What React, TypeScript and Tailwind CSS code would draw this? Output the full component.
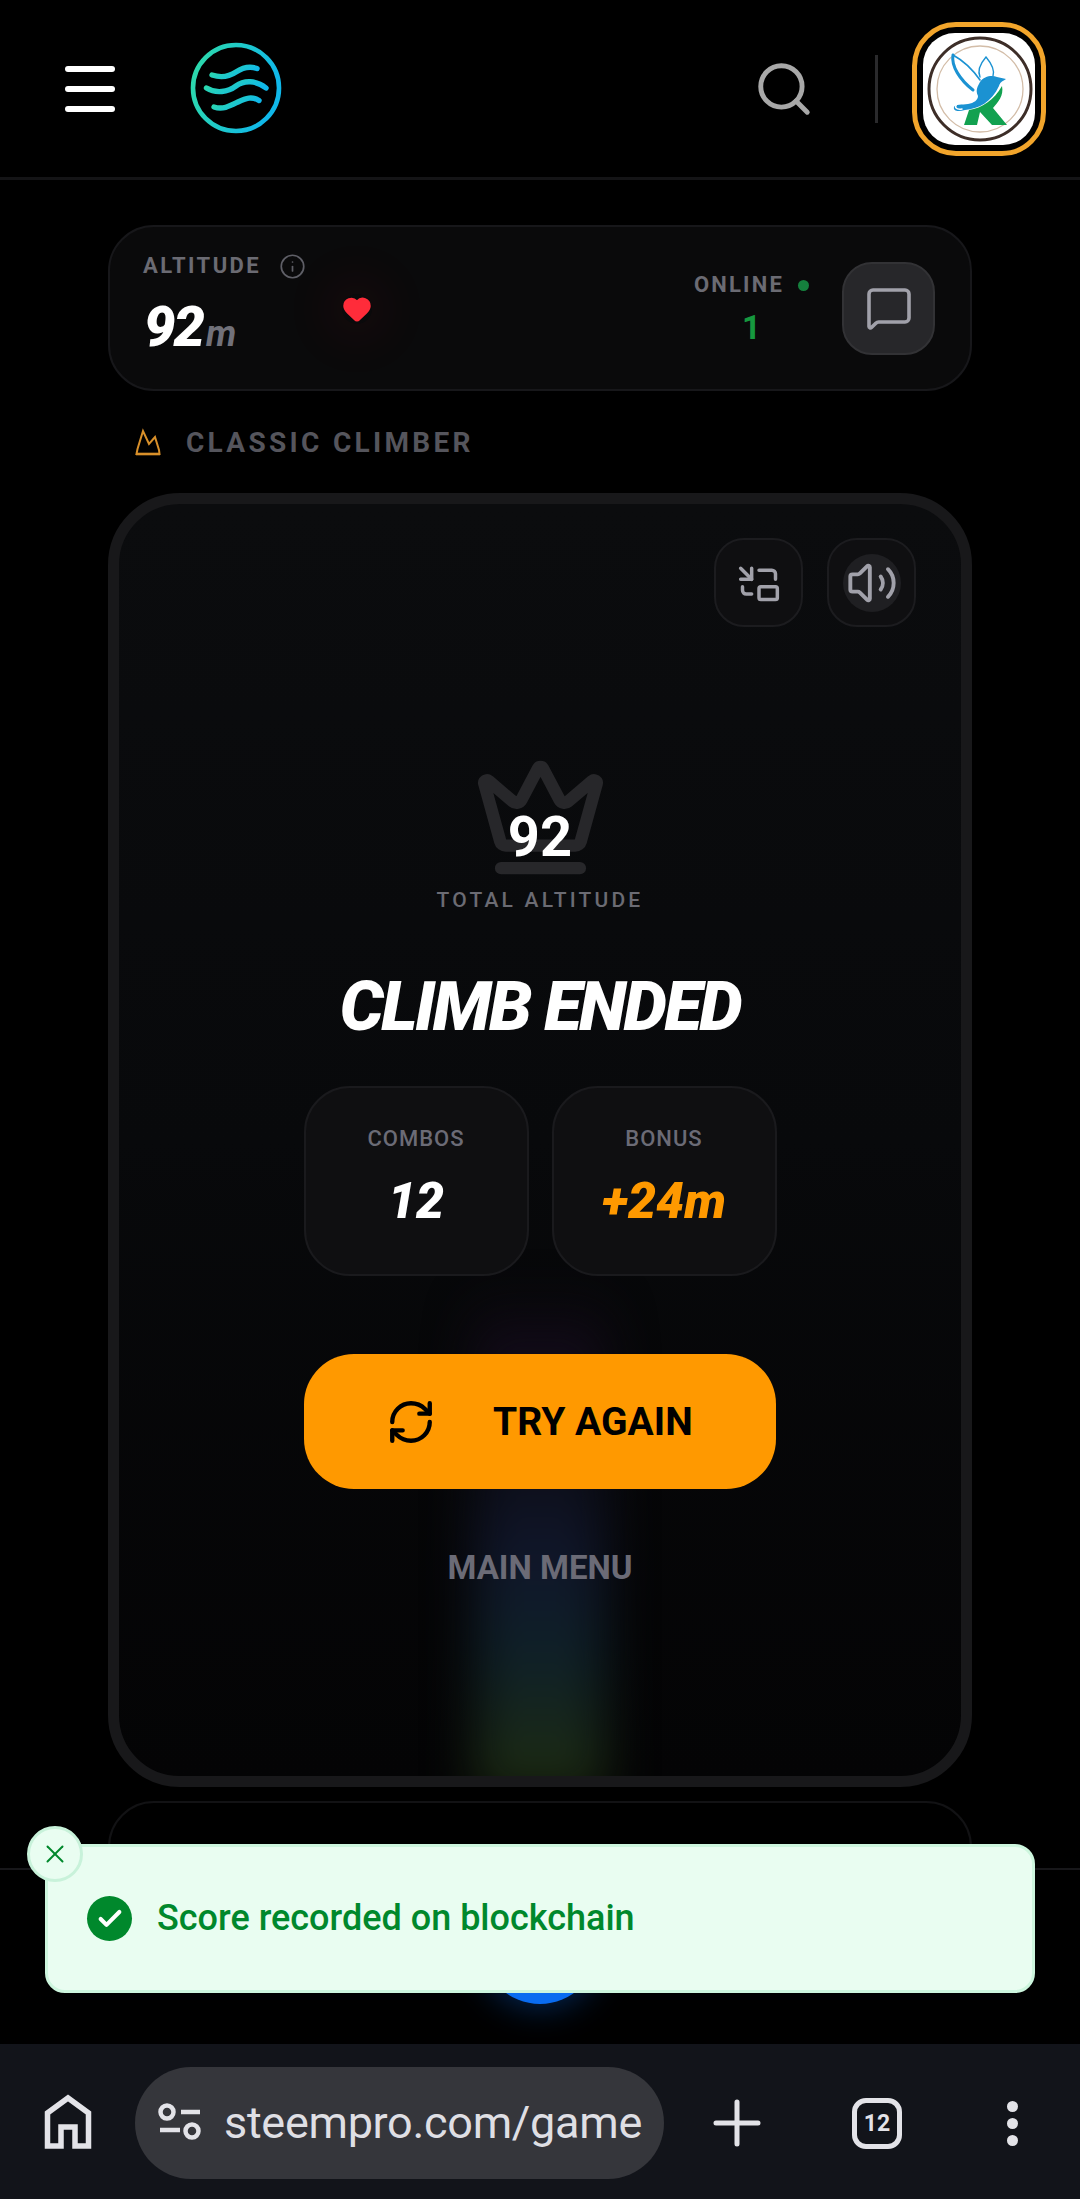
import React from "react";
import { Crown, Heart, Info, MessageSquare, PictureInPicture, RefreshCw, Search, Volume2, X, Check } from "lucide-react";

function WaveLogo() {
  return (
    <svg width="110" height="110" viewBox="0 0 110 110" fill="none" className="ml-[65px]">
      <defs>
        <linearGradient id="wl" x1="0" y1="0" x2="1" y2="0.3">
          <stop offset="0" stopColor="#2fdca6" />
          <stop offset="1" stopColor="#10b8ea" />
        </linearGradient>
      </defs>
      <g stroke="url(#wl)" strokeLinecap="round" strokeWidth="5.4">
        <circle cx="56" cy="54" r="43" strokeWidth="4.6" />
        <path d="M32 41C41 44 50 42 56 38S70 32 77 34.5" />
        <path d="M26.500 54C36 60 48 58 56 52S76 46 86 54" />
        <path d="M34 73C43 76 50 72 58 68S72 62 79 66.500" />
      </g>
    </svg>
  );
}

function Avatar() {
  return (
    <div className="w-[134px] h-[134px] rounded-[44px] border-[5px] border-[#f2a52b] bg-black flex items-center justify-center">
      <div className="w-[112px] h-[112px] rounded-[32px] bg-white overflow-hidden">
        <svg width="112" height="112" viewBox="3 3 112 112" fill="none">
          <circle cx="60" cy="59" r="51" stroke="#3d2e28" strokeWidth="3" />
          <circle cx="60" cy="59" r="43" stroke="#d3bda8" strokeWidth="1.300" />
          <path d="M82 56C84 66 78 72 73 78L87 95H72L60 82L57 95H44L49 80C62 78 74 70 82 56Z" fill="#12a150" />
          <path d="M86 49L77 47C72 45 64 46 60 52C58 56 55 60 58 66C58 70 54 73 48 74C42 75 35 74 34 77C33 81 38 82 45 80C58 79 72 72 79 56C80 52 83 51 86 49Z" fill="#1b92d2" />
          <path d="M33 25C31 36 40 50 53 60" stroke="#1b92d2" strokeWidth="3" strokeLinecap="round" />
          <path d="M33 25C44 31 53 40 60 50" stroke="#1b92d2" strokeWidth="1.600" strokeLinecap="round" />
          <path d="M66 27C60 34 57 40 60 47M66 27C71 33 75 40 73 46" stroke="#1b92d2" strokeWidth="1.400" strokeLinecap="round" />
          <path d="M37 74C34 77 36 80 42 79" stroke="#ffffff" strokeWidth="1.500" strokeLinecap="round" />
        </svg>
      </div>
    </div>
  );
}

function Header() {
  return (
    <header className="h-[180px] shrink-0 border-b-[3px] border-[#141416] flex items-center">
      <div className="ml-[65px] w-[50px] flex flex-col gap-[14px]">
        <div className="h-[6px] rounded-full bg-white" />
        <div className="h-[6px] rounded-full bg-white" />
        <div className="h-[6px] rounded-full bg-white" />
      </div>
      <WaveLogo />
      <div className="flex-1" />
      <Search size={62} strokeWidth={1.9} color="#a8a8a8" />
      <div className="ml-[60px] w-[3px] h-[68px] bg-[#2a2a2c]" />
      <div className="ml-[34px] mr-[34px]">
        <Avatar />
      </div>
    </header>
  );
}

function SmallCrown() {
  return (
    <svg width="30" height="28" viewBox="0 0 30 28" fill="none" stroke="#d9902a" strokeWidth="2" strokeLinejoin="miter">
      <path d="M3.500 26L4.500 21L10 3L16 16L22 9L26 22L26.500 26Z" />
      <path d="M3 26H27" strokeWidth="2.600" />
    </svg>
  );
}

function StatusCard() {
  return (
    <section className="h-[166px] rounded-[46px] border-[2px] border-[#17171a] bg-[#0a0a0b] flex pl-[33px] pr-[35px] relative overflow-hidden">
      <div className="pt-[25px]">
        <div className="flex items-center gap-[18px]">
          <span className="text-[22px] leading-[28px] font-bold tracking-[2.4px] text-[#6b6b73]">ALTITUDE</span>
          <Info size={27} strokeWidth={1.5} color="#5f5f67" />
        </div>
        <div className="mt-[17px] flex items-baseline italic font-black text-white leading-[60px]">
          <span className="text-[56px] tracking-[-2px] ml-[1px]">92</span>
          <span className="text-[36px] text-[#71717a] font-bold ml-[3px]">m</span>
        </div>
      </div>
      <div className="self-center mt-[2px] ml-[36px] w-[30px] h-[30px] rounded-full shadow-[0_0_50px_20px_rgba(255,40,50,0.05)] flex items-center justify-center">
        <Heart size={32} fill="#ff2c3a" color="#ff2c3a" />
      </div>
      <div className="flex-1" />
      <div className="pt-[44px] flex flex-col items-center">
        <div className="flex items-center gap-[14px]">
          <span className="text-[22px] leading-[28px] font-bold tracking-[2.2px] text-[#6b6b73]">ONLINE</span>
          <span className="w-[11px] h-[11px] rounded-full bg-[#15803d]" />
        </div>
        <span className="text-[33px] leading-[40px] mt-[9px] font-bold text-[#16983f]">1</span>
      </div>
      <button className="self-center ml-[33px] w-[93px] h-[93px] rounded-[30px] bg-[#27272a] border-[2px] border-[#323235] flex items-center justify-center">
        <MessageSquare size={48} strokeWidth={1.8} color="#a1a1aa" />
      </button>
    </section>
  );
}

function StatTile({ label, value, valueClass }: { label: string; value: string; valueClass: string }) {
  return (
    <div className="w-[225px] h-[190px] rounded-[46px] border-[2px] border-[#1a1a1d] bg-[#0f0f11] flex flex-col items-center pt-[39px]">
      <span className="text-[22px] leading-[24px] font-medium tracking-[1px] text-[#6b6b76]">{label}</span>
      <span className={`mt-[22px] text-[50px] leading-[56px] italic font-black ${valueClass}`}>{value}</span>
    </div>
  );
}

function GameCard() {
  return (
    <section className="h-[1294px] rounded-[72px] border-[11px] border-[#18181a] bg-gradient-to-b from-[#0b0c0e] via-[#08090b] to-[#040405] relative overflow-hidden flex flex-col items-center">
      <div className="absolute left-[356px] top-[790px] w-[130px] h-[500px] blur-[24px] bg-[linear-gradient(to_bottom,#0a0a1000_0%,#130b1a_12%,#0c0c14_30%,#10162a_52%,#0f2028_72%,#1e2c10_100%)]" />
      <div className="relative self-end mt-[34px] mr-[45px] flex gap-[24px]">
        <button className="w-[89px] h-[89px] rounded-[30px] bg-[#0f0f11] border-[2px] border-[#1c1c1f] flex items-center justify-center">
          <PictureInPicture size={44} strokeWidth={1.9} color="#a1a1aa" />
        </button>
        <button className="w-[89px] h-[89px] rounded-[30px] bg-[#0f0f11] border-[2px] border-[#1c1c1f] flex items-center justify-center">
          <span className="w-[58px] h-[58px] rounded-full bg-[#1f1f22] flex items-center justify-center">
            <Volume2 size={52} strokeWidth={1.8} color="#a1a1aa" className="shrink-0" />
          </span>
        </button>
      </div>
      <div className="relative mt-[123px] w-[135px] h-[135px]">
        <Crown size={135} strokeWidth={2.2} color="#27272a" />
        <span className="absolute inset-x-0 top-[53px] text-center text-[56px] leading-[68px] font-bold text-white">92</span>
      </div>
      <span className="relative mt-[1px] text-[21px] leading-[28px] font-medium tracking-[3.2px] text-[#6b6b73]">TOTAL ALTITUDE</span>
      <h1 className="relative mt-[53px] text-[69px] leading-[80px] italic font-black tracking-[-2.5px] text-white">CLIMB ENDED</h1>
      <div className="relative mt-[39px] flex gap-[23px]">
        <StatTile label="COMBOS" value="12" valueClass="text-white" />
        <StatTile label="BONUS" value="+24m" valueClass="text-[#ff9900]" />
      </div>
      <button className="relative mt-[78px] w-[472px] h-[135px] rounded-[50px] bg-[#ff9900] flex items-center">
        <RefreshCw size={50} strokeWidth={2.1} color="#000" className="ml-[82px]" />
        <span className="ml-[57px] text-[39px] leading-[46px] font-bold text-black">TRY AGAIN</span>
      </button>
      <button className="relative mt-[59px] text-[33px] leading-[40px] font-bold text-[#6b6b76]">MAIN MENU</button>
    </section>
  );
}

function BrowserBar() {
  return (
    <footer className="h-[155px] shrink-0 bg-[#12141a] flex items-center pt-[3px] text-[#e3e3e8]">
      <svg width="56" height="60" viewBox="0 0 56 60" fill="none" className="ml-[40px]">
        <path d="M7.500 53V20L28 5L48.500 20V53H35V34H21V53Z" stroke="#e3e3e8" strokeWidth="5.500" />
      </svg>
      <div className="ml-[39px] w-[529px] h-[112px] rounded-full bg-[#35363b] flex items-center overflow-hidden">
        <svg width="44" height="44" viewBox="0 0 44 44" fill="none" className="ml-[23px] shrink-0" stroke="#e3e3e8" strokeWidth="4.500">
          <circle cx="9" cy="11" r="6.500" />
          <path d="M23 11H42M2 29H22" />
          <circle cx="34" cy="30" r="6.500" />
        </svg>
        <span className="ml-[22px] text-[45px] leading-[56px] font-normal tracking-[-0.3px] whitespace-nowrap text-[#dfdfe4]">steempro.com/game</span>
      </div>
      <svg width="48" height="48" viewBox="0 0 48 48" className="ml-[49px]" stroke="#e3e3e8" strokeWidth="5" strokeLinecap="round">
        <path d="M3 24H45M24 3V45" />
      </svg>
      <div className="ml-[91px] w-[50px] h-[51px] rounded-[14px] border-[5px] border-[#e3e3e8] flex items-center justify-center text-[23px] font-bold leading-none">12</div>
      <div className="ml-[105px] flex flex-col gap-[6px]">
        <span className="w-[11px] h-[11px] rounded-full bg-[#e3e3e8]" />
        <span className="w-[11px] h-[11px] rounded-full bg-[#e3e3e8]" />
        <span className="w-[11px] h-[11px] rounded-full bg-[#e3e3e8]" />
      </div>
    </footer>
  );
}

function Toast() {
  return (
    <div className="absolute left-[45px] top-[1844px] w-[990px] h-[149px] rounded-[20px] bg-[#e9fdf1] border-[3px] border-[#cdf6de] flex items-center pl-[39px]">
      <span className="w-[45px] h-[45px] rounded-full bg-[#00882c] flex items-center justify-center">
        <Check size={28} strokeWidth={3.5} color="#fff" />
      </span>
      <span className="ml-[25px] mb-[2px] text-[36px] leading-[44px] font-medium text-[#00882c]">Score recorded on blockchain</span>
      <span className="absolute left-[-21px] top-[-21px] w-[56px] h-[56px] rounded-full bg-[#e9fdf1] border-[3px] border-[#c8f2da] flex items-center justify-center">
        <X size={30} strokeWidth={1.6} color="#00882c" />
      </span>
    </div>
  );
}

export default function App() {
  return (
    <div className="relative w-[1080px] h-[2199px] overflow-hidden bg-black flex flex-col font-['Roboto',sans-serif]">
      <Header />
      <main className="flex-1 min-h-0 overflow-hidden px-[108px] pt-[45px]">
        <StatusCard />
        <div className="mt-[33px] h-[36px] flex items-center pl-[25px]">
          <SmallCrown />
          <span className="ml-[23px] mt-[1px] text-[28px] leading-[36px] font-bold tracking-[3.3px] text-[#55555c]">CLASSIC CLIMBER</span>
        </div>
        <div className="mt-[33px]">
          <GameCard />
        </div>
        <div className="mt-[14px] h-[200px] rounded-[46px] border-[2px] border-[#121214]" />
      </main>
      <nav className="h-[176px] shrink-0 bg-black border-t-[2px] border-[#17171a] flex justify-center pt-[18px]">
        <span className="w-[116px] h-[116px] rounded-full bg-[#0a6cf0] shadow-[0_0_36px_rgba(10,108,240,0.45)]" />
      </nav>
      <BrowserBar />
      <Toast />
    </div>
  );
}
